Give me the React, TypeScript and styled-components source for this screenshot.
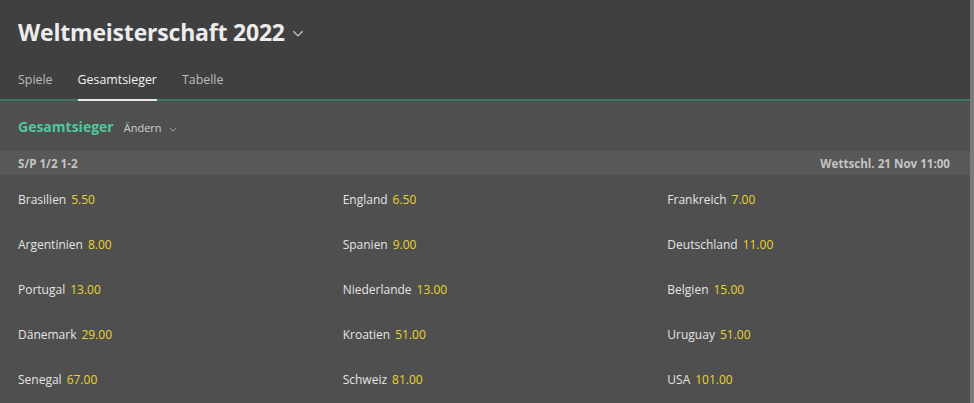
import { FC } from 'react';
import styled, { createGlobalStyle } from 'styled-components';

const GlobalStyle = createGlobalStyle`
    html, body {
        margin: 0;
        padding: 0;
        background: #4f4f4f;
    }
    body {
        font-family: "Open Sans", "Noto Sans", sans-serif;
    }
`;

const Colors = {
    headerBg: '#404040',
    bodyBg: '#4f4f4f',
    barBg: '#585858',
    green: '#3e7564',
    greenText: '#4fc99b',
    odds: '#ead52a',
    text: '#e4e4e4',
    muted: '#c4c4c4',
};

const Page = styled.div`
    display: flex;
    width: 974px;
    height: 403px;
    overflow: hidden;
`;

const Main = styled.div`
    flex: 1;
    display: flex;
    flex-direction: column;
    background: ${Colors.bodyBg};
`;

const ScrollEdge = styled.div`
    width: 4px;
    flex-shrink: 0;
    background: #7b7b7b;
`;

const Header = styled.header`
    background: ${Colors.headerBg};
    padding: 0 18px;
    border-bottom: 2px solid ${Colors.green};
`;

const TitleRow = styled.div`
    display: flex;
    align-items: center;
    height: 63px;
    padding-bottom: 3px;
`;

const Title = styled.h1`
    margin: 0;
    font-size: 23px;
    font-weight: 700;
    color: #ececec;
    letter-spacing: -0.2px;
`;

const Chevron = styled.svg<{ $size: number }>`
    width: ${p => p.$size}px;
    height: ${p => p.$size}px;
    margin-left: 6px;
    margin-top: 3px;
`;

const Tabs = styled.nav`
    display: flex;
    gap: 25px;
`;

const Tab = styled.div<{ $active?: boolean }>`
    font-size: 12.4px;
    height: 33px;
    line-height: 28px;
    color: ${p => (p.$active ? '#f0f0f0' : '#bcbcbc')};
    margin-bottom: -2px;
    border-bottom: 2px solid ${p => (p.$active ? '#e8e8e8' : 'transparent')};
`;

const SectionHead = styled.div`
    display: flex;
    align-items: center;
    height: 50px;
    padding: 0 18px;
`;

const SectionTitle = styled.span`
    font-size: 14px;
    font-weight: 700;
    color: ${Colors.greenText};
`;

const Change = styled.span`
    display: flex;
    align-items: center;
    margin-left: 10px;
    margin-top: 2px;
    font-size: 11px;
    color: #d0d0d0;
`;

const InfoBar = styled.div`
    display: flex;
    align-items: center;
    justify-content: space-between;
    height: 24px;
    padding: 0 20px 0 18px;
    background: ${Colors.barBg};
    font-size: 11.6px;
    font-weight: 700;
    color: ${Colors.muted};
`;

const Grid = styled.div`
    display: grid;
    grid-template-columns: repeat(3, 1fr);
    column-gap: 22px;
    padding: 2px 0 0 18px;
`;

const Pick = styled.div`
    display: flex;
    align-items: center;
    height: 45px;
    font-size: 12px;
`;

const Name = styled.span`
    color: ${Colors.text};
`;

const Odds = styled.span`
    margin-left: 5px;
    color: ${Colors.odds};
`;

const picks: [string, string][] = [
    ['Brasilien', '5.50'],
    ['England', '6.50'],
    ['Frankreich', '7.00'],
    ['Argentinien', '8.00'],
    ['Spanien', '9.00'],
    ['Deutschland', '11.00'],
    ['Portugal', '13.00'],
    ['Niederlande', '13.00'],
    ['Belgien', '15.00'],
    ['Dänemark', '29.00'],
    ['Kroatien', '51.00'],
    ['Uruguay', '51.00'],
    ['Senegal', '67.00'],
    ['Schweiz', '81.00'],
    ['USA', '101.00'],
];

const Down: FC<{ size: number; color: string }> = ({ size, color }) => (
    <Chevron $size={size} viewBox="0 0 12 12" fill="none">
        <path d="M2 4.5 6 8.5 10 4.5" stroke={color} strokeWidth="1.1" />
    </Chevron>
);

export default function App() {
    return (
        <Page>
            <GlobalStyle />
            <Main>
                <Header>
                    <TitleRow>
                        <Title>Weltmeisterschaft 2022</Title>
                        <Down size={14} color="#c8c8c8" />
                    </TitleRow>
                    <Tabs>
                        <Tab>Spiele</Tab>
                        <Tab $active>Gesamtsieger</Tab>
                        <Tab>Tabelle</Tab>
                    </Tabs>
                </Header>

                <SectionHead>
                    <SectionTitle>Gesamtsieger</SectionTitle>
                    <Change>
                        Ändern
                        <Down size={10} color="#a8a8a8" />
                    </Change>
                </SectionHead>

                <InfoBar>
                    <span>S/P 1/2 1-2</span>
                    <span>Wettschl. 21 Nov 11:00</span>
                </InfoBar>

                <Grid>
                    {picks.map(([name, odds]) => (
                        <Pick key={name}>
                            <Name>{name}</Name>
                            <Odds>{odds}</Odds>
                        </Pick>
                    ))}
                </Grid>
            </Main>
            <ScrollEdge />
        </Page>
    );
}
